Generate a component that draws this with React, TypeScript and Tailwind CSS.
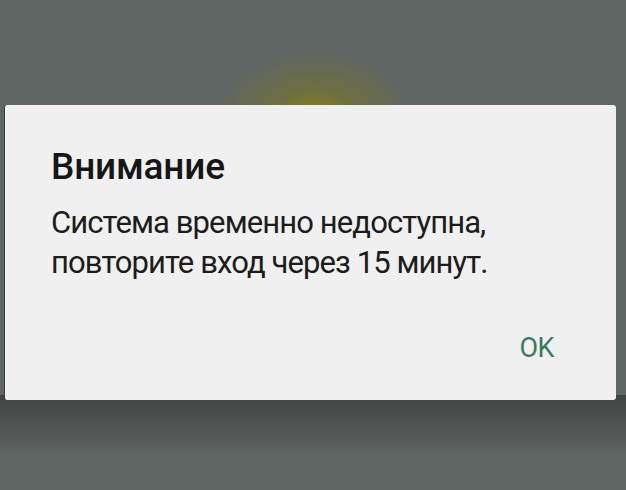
export default function App() {
  return (
    <div className="relative flex h-[490px] w-[626px] flex-col overflow-hidden bg-[#5f6563] px-[4px] pt-[105px] font-['Roboto',sans-serif]">
      {/* yellow glow of the screen behind the dialog */}
      <div className="pointer-events-none absolute left-[215px] top-[50px] h-[140px] w-[200px] rounded-full bg-[radial-gradient(ellipse_at_center,rgba(145,135,15,0.95)_0%,rgba(125,120,35,0.55)_30%,rgba(95,101,99,0)_70%)]" />
      {/* shadow under the dialog */}
      <div className="pointer-events-none absolute left-0 top-[395px] h-[60px] w-full bg-gradient-to-b from-[#404341] to-[#5f6563]/0" />
      <div className="relative z-10 flex h-[295px] w-[612px] flex-col rounded-[3px] border-l border-[#3a3c3a] bg-[#f0f0f0] pl-[46px] pr-[46px]">
        <h1 className="mt-[40px] text-[37px] font-medium leading-[44px] tracking-[-0.2px] text-[#161616]">
          Внимание
        </h1>
        <p className="mt-[14px] text-[31px] leading-[40px] tracking-[-0.9px] text-[#1c1c1c]">
          Система временно недоступна,
          <br />
          повторите вход через 15 минут.
        </p>
        <div className="mt-auto mb-[37px] flex justify-end pr-[16px]">
          <span className="text-[27px] leading-[30px] tracking-[-0.5px] text-[#3b7a5e]">OK</span>
        </div>
      </div>
    </div>
  );
}
